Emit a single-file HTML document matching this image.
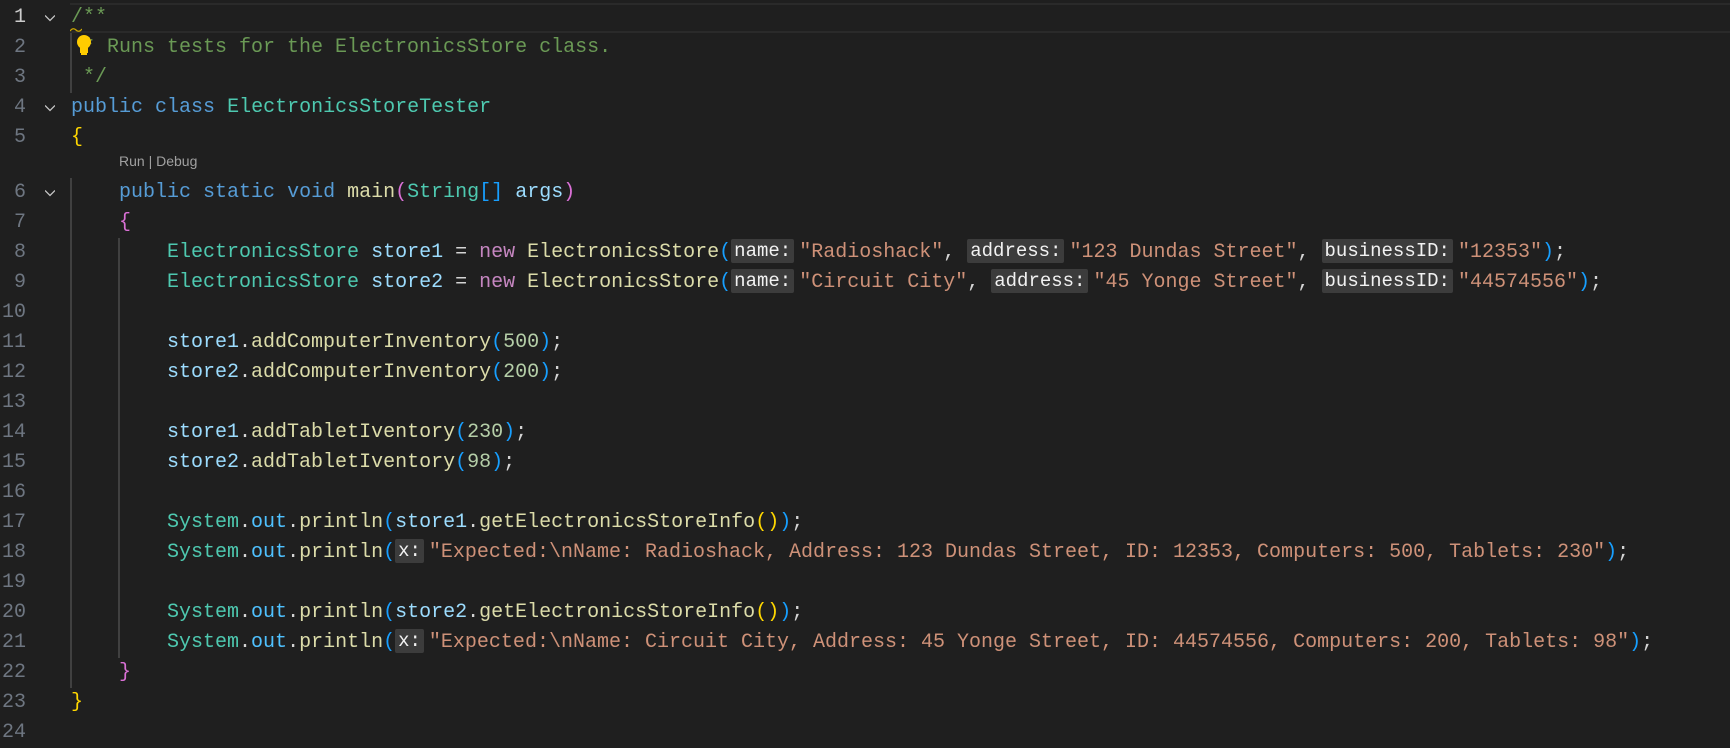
<!DOCTYPE html>
<html><head><meta charset="utf-8"><style>
html,body{margin:0;padding:0;background:#1f1f1f;width:1730px;height:742px;overflow:hidden}
.ln{position:absolute;left:0;width:26px;text-align:right;font:20px "Liberation Mono",monospace;color:#6e7681;line-height:30px;height:30px}
.code{position:absolute;left:71px;font:20px "Liberation Mono",monospace;line-height:30px;height:30px;white-space:pre;color:#d4d4d4}
.chev{position:absolute;left:45px;width:10px;height:10px}
.c{color:#6a9955}.k{color:#569cd6}.t{color:#4ec9b0}.f{color:#dcdcaa}.s{color:#ce9178}.n{color:#b5cea8}.v{color:#9cdcfe}.p{color:#c586c0}.o{color:#4fc1ff}
.b1{color:#ffd700}.b2{color:#da70d6}.b3{color:#179fff}
.h{display:inline-block;background:#3c3c3c;color:#f2f2f2;font-size:19px;line-height:24px;height:24px;vertical-align:1px;padding:0 3px;margin-right:5px;border-radius:2px}
.g{position:absolute;width:2px;background:#404040}
</style></head><body>
<div style="position:absolute;left:70px;top:3px;width:1660px;height:26px;border-top:2px solid #2a2a2a;border-bottom:2px solid #2a2a2a"></div>
<div class="g" style="left:70px;top:33px;height:60px"></div>
<div class="g" style="left:70px;top:178px;height:510px"></div>
<div class="g" style="left:118px;top:238px;height:420px"></div>

<svg class="chev" style="top:13px" viewBox="0 0 10 10"><path d="M0 2.5L5 7.5L10 2.5" fill="none" stroke="#c5c5c5" stroke-width="1.3"/></svg>
<svg class="chev" style="top:103px" viewBox="0 0 10 10"><path d="M0 2.5L5 7.5L10 2.5" fill="none" stroke="#c5c5c5" stroke-width="1.3"/></svg>
<svg class="chev" style="top:188px" viewBox="0 0 10 10"><path d="M0 2.5L5 7.5L10 2.5" fill="none" stroke="#c5c5c5" stroke-width="1.3"/></svg>

<div class="ln" style="top:3px;color:#cccccc">1</div>
<div class="ln" style="top:33px">2</div>
<div class="ln" style="top:63px">3</div>
<div class="ln" style="top:93px">4</div>
<div class="ln" style="top:123px">5</div>
<div class="ln" style="top:178px">6</div>
<div class="ln" style="top:208px">7</div>
<div class="ln" style="top:238px">8</div>
<div class="ln" style="top:268px">9</div>
<div class="ln" style="top:298px">10</div>
<div class="ln" style="top:328px">11</div>
<div class="ln" style="top:358px">12</div>
<div class="ln" style="top:388px">13</div>
<div class="ln" style="top:418px">14</div>
<div class="ln" style="top:448px">15</div>
<div class="ln" style="top:478px">16</div>
<div class="ln" style="top:508px">17</div>
<div class="ln" style="top:538px">18</div>
<div class="ln" style="top:568px">19</div>
<div class="ln" style="top:598px">20</div>
<div class="ln" style="top:628px">21</div>
<div class="ln" style="top:658px">22</div>
<div class="ln" style="top:688px">23</div>
<div class="ln" style="top:718px">24</div>

<div class="code" style="top:3px"><span class="c">/**</span></div>
<svg style="position:absolute;left:70px;top:27px" width="12" height="6" viewBox="0 0 12 6"><path d="M0 4Q3 0 6 3T12 2" fill="none" stroke="#cca700" stroke-width="1.3"/></svg>
<div class="code" style="top:33px"><span class="c"> * Runs tests for the ElectronicsStore class.</span></div>
<svg style="position:absolute;left:76px;top:34px" width="16" height="22" viewBox="0 0 16 22"><circle cx="8" cy="8" r="7" fill="#ffcc00"/><rect x="4" y="13" width="8" height="6" fill="#ffcc00"/><rect x="5" y="19" width="6" height="2" fill="#ffcc00"/></svg>
<div class="code" style="top:63px"><span class="c"> */</span></div>
<div class="code" style="top:93px"><span class="k">public</span> <span class="k">class</span> <span class="t">ElectronicsStoreTester</span></div>
<div class="code" style="top:123px"><span class="b1">{</span></div>
<div style="position:absolute;left:119px;top:153px;height:25px;line-height:25px;font:14px 'Liberation Sans',sans-serif;color:#a0a0a0">Run | Debug</div>
<div class="code" style="top:178px">    <span class="k">public</span> <span class="k">static</span> <span class="k">void</span> <span class="f">main</span><span class="b2">(</span><span class="t">String</span><span class="b3">[]</span> <span class="v">args</span><span class="b2">)</span></div>
<div class="code" style="top:208px">    <span class="b2">{</span></div>
<div class="code" style="top:238px">        <span class="t">ElectronicsStore</span> <span class="v">store1</span> = <span class="p">new</span> <span class="f">ElectronicsStore</span><span class="b3">(</span><span class="h">name:</span><span class="s">"Radioshack"</span>, <span class="h">address:</span><span class="s">"123 Dundas Street"</span>, <span class="h">businessID:</span><span class="s">"12353"</span><span class="b3">)</span>;</div>
<div class="code" style="top:268px">        <span class="t">ElectronicsStore</span> <span class="v">store2</span> = <span class="p">new</span> <span class="f">ElectronicsStore</span><span class="b3">(</span><span class="h">name:</span><span class="s">"Circuit City"</span>, <span class="h">address:</span><span class="s">"45 Yonge Street"</span>, <span class="h">businessID:</span><span class="s">"44574556"</span><span class="b3">)</span>;</div>
<div class="code" style="top:328px">        <span class="v">store1</span>.<span class="f">addComputerInventory</span><span class="b3">(</span><span class="n">500</span><span class="b3">)</span>;</div>
<div class="code" style="top:358px">        <span class="v">store2</span>.<span class="f">addComputerInventory</span><span class="b3">(</span><span class="n">200</span><span class="b3">)</span>;</div>
<div class="code" style="top:418px">        <span class="v">store1</span>.<span class="f">addTabletIventory</span><span class="b3">(</span><span class="n">230</span><span class="b3">)</span>;</div>
<div class="code" style="top:448px">        <span class="v">store2</span>.<span class="f">addTabletIventory</span><span class="b3">(</span><span class="n">98</span><span class="b3">)</span>;</div>
<div class="code" style="top:508px">        <span class="t">System</span>.<span class="o">out</span>.<span class="f">println</span><span class="b3">(</span><span class="v">store1</span>.<span class="f">getElectronicsStoreInfo</span><span class="b1">()</span><span class="b3">)</span>;</div>
<div class="code" style="top:538px">        <span class="t">System</span>.<span class="o">out</span>.<span class="f">println</span><span class="b3">(</span><span class="h">x:</span><span class="s">"Expected:\nName: Radioshack, Address: 123 Dundas Street, ID: 12353, Computers: 500, Tablets: 230"</span><span class="b3">)</span>;</div>
<div class="code" style="top:598px">        <span class="t">System</span>.<span class="o">out</span>.<span class="f">println</span><span class="b3">(</span><span class="v">store2</span>.<span class="f">getElectronicsStoreInfo</span><span class="b1">()</span><span class="b3">)</span>;</div>
<div class="code" style="top:628px">        <span class="t">System</span>.<span class="o">out</span>.<span class="f">println</span><span class="b3">(</span><span class="h">x:</span><span class="s">"Expected:\nName: Circuit City, Address: 45 Yonge Street, ID: 44574556, Computers: 200, Tablets: 98"</span><span class="b3">)</span>;</div>
<div class="code" style="top:658px">    <span class="b2">}</span></div>
<div class="code" style="top:688px"><span class="b1">}</span></div>
</body></html>
